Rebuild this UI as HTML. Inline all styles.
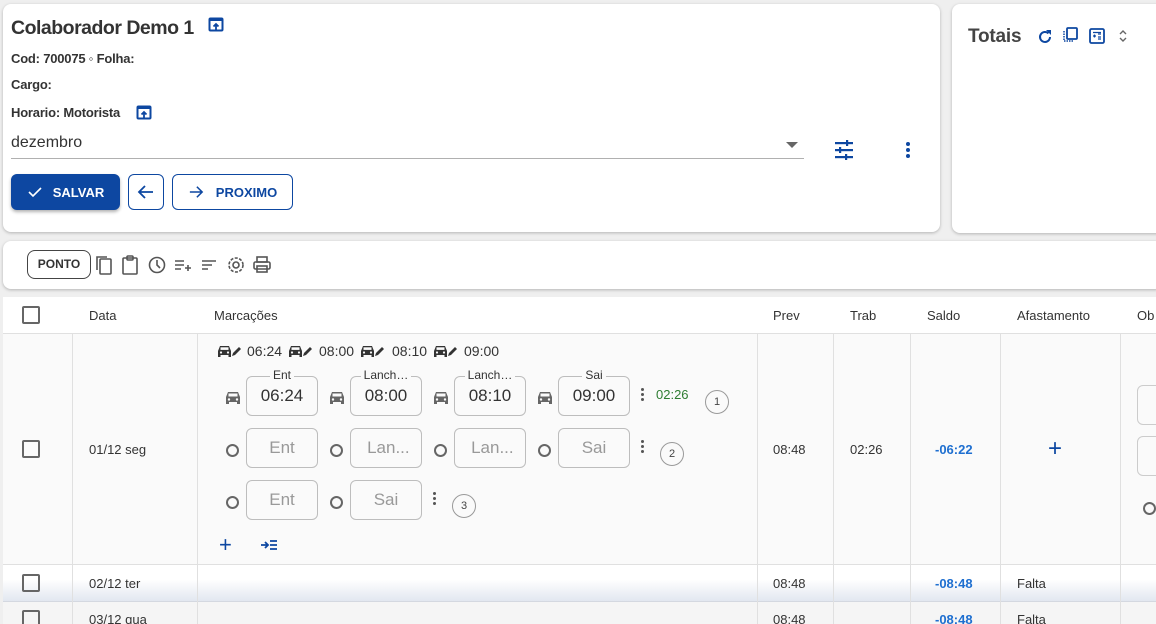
<!DOCTYPE html>
<html><head><meta charset="utf-8">
<style>
*{box-sizing:border-box;margin:0;padding:0}
html,body{width:1156px;height:624px;overflow:hidden}
body{background:#efefef;font-family:"Liberation Sans",Arial,sans-serif;color:#333;position:relative}
.a{position:absolute}
.card{position:absolute;background:#fff;border-radius:8px;box-shadow:0 1px 3px rgba(0,0,0,.25)}
.b{font-weight:bold;font-size:13px;color:#333;letter-spacing:-0.2px}
.btn{position:absolute;border:1px solid #0d47a1;border-radius:6px;color:#0d47a1;font-weight:bold;font-size:13px;display:flex;align-items:center;justify-content:center;background:#fff}
.cb{position:absolute;width:18px;height:18px;border:2px solid #666;border-radius:2px}
.vl{position:absolute;width:1px;background:#e0e0e0}
.hl{position:absolute;height:1px;background:#e0e0e0}
.t{position:absolute;font-size:14px;color:#333}
.f{position:absolute;width:72px;height:40px;border:1px solid #bdbdbd;border-radius:6px;font-size:17px;color:#333;text-align:center;line-height:38px}
.f.e{color:#999}
.lab{position:absolute;top:-8px;left:0;right:0;font-size:12px;line-height:12px;text-align:center}
.lab span{background:#fafafa;padding:0 3px}
.ci{position:absolute;width:13px;height:13px;border:2px solid #666;border-radius:50%}
.num{position:absolute;width:24px;height:24px;border:1px solid #999;border-radius:50%;font-size:11px;text-align:center;line-height:22px;color:#444}
.dots{position:absolute;width:3px}
.dots i{display:block;width:3px;height:3px;background:#555;border-radius:50%;margin-bottom:2px}
</style></head><body>
<svg width="0" height="0" style="position:absolute"><defs>
<g id="car"><path d="M2 7l2-5h10l2 5v7h-3v-2H5v2H2z"/><circle cx="5" cy="9.5" r="1.2" fill="#fafafa"/><circle cx="13" cy="9.5" r="1.2" fill="#fafafa"/><rect x="4.5" y="3.5" width="9" height="3" fill="#fafafa"/></g>
<g id="cp"><path d="M1 8l2-5h9l2 5v6h-2.5v-2h-8v2H1z" fill="#333"/><rect x="3.5" y="4.3" width="8" height="2.6" fill="#fafafa"/><circle cx="4" cy="9.5" r="1.1" fill="#fafafa"/><circle cx="11" cy="9.5" r="1.1" fill="#fafafa"/><path d="M15 13l1-3 6-6 2 2-6 6z" fill="#333"/></g>
</defs></svg>

<div class="card" style="left:3px;top:4px;width:937px;height:228px"></div>
<div class="a" style="left:11px;top:17px;font-size:19.5px;font-weight:bold;color:#333;letter-spacing:-0.5px">Colaborador Demo 1</div>
<svg class="a" style="left:208px;top:17px" width="16" height="16" viewBox="0 0 16 16"><rect x="1.5" y="1.5" width="13" height="12" rx="1" fill="none" stroke="#0d47a1" stroke-width="2"/><rect x="1" y="1" width="14" height="3" fill="#0d47a1"/><path d="M8 13V7M5.5 9.5L8 7l2.5 2.5" stroke="#0d47a1" stroke-width="1.8" fill="none"/></svg>
<div class="a b" style="left:11px;top:51px">Cod: 700075 ◦ Folha:</div>
<div class="a b" style="left:11px;top:77px">Cargo:</div>
<div class="a b" style="left:11px;top:105px">Horario: Motorista</div>
<svg class="a" style="left:136px;top:105px" width="16" height="16" viewBox="0 0 16 16"><rect x="1.5" y="1.5" width="13" height="12" rx="1" fill="none" stroke="#0d47a1" stroke-width="2"/><rect x="1" y="1" width="14" height="3" fill="#0d47a1"/><path d="M8 13V7M5.5 9.5L8 7l2.5 2.5" stroke="#0d47a1" stroke-width="1.8" fill="none"/></svg>
<div class="a" style="left:11px;top:134px;font-size:16px;color:#333">dezembro</div>
<div class="a" style="left:11px;top:158px;width:793px;height:1px;background:#b0b0b0"></div>
<div class="a" style="left:786px;top:142px;width:0;height:0;border-left:6px solid transparent;border-right:6px solid transparent;border-top:6px solid #666"></div>
<svg class="a" style="left:834px;top:140px" width="20" height="20" viewBox="0 0 20 20" fill="#0d47a1"><rect x="1" y="2" width="18" height="2.2"/><rect x="1" y="9" width="18" height="2.2"/><rect x="1" y="16" width="18" height="2.2"/><rect x="12" y="0" width="2.2" height="6" /><rect x="5" y="7" width="2.2" height="6"/><rect x="11" y="14" width="2.2" height="6"/></svg>
<div class="a" style="left:906px;top:142px"><div style="width:4px;height:4px;border-radius:50%;background:#0d47a1;margin-bottom:2px"></div><div style="width:4px;height:4px;border-radius:50%;background:#0d47a1;margin-bottom:2px"></div><div style="width:4px;height:4px;border-radius:50%;background:#0d47a1"></div></div>
<div class="btn" style="left:11px;top:174px;width:109px;height:36px;background:#0d47a1;color:#fff;box-shadow:0 2px 3px rgba(0,0,0,.3)"><svg width="16" height="14" viewBox="0 0 16 14" style="margin-right:10px"><path d="M2 7l4 4 8-8" stroke="#fff" stroke-width="1.6" fill="none"/></svg>SALVAR</div>
<div class="btn" style="left:128px;top:174px;width:36px;height:36px"><svg width="18" height="16" viewBox="0 0 18 16"><path d="M16 8H3M8 2L2 8l6 6" stroke="#0d47a1" stroke-width="1.8" fill="none"/></svg></div>
<div class="btn" style="left:172px;top:174px;width:121px;height:36px"><svg width="16" height="14" viewBox="0 0 18 16" style="margin-right:12px"><path d="M2 8h13M10 2l6 6-6 6" stroke="#0d47a1" stroke-width="1.8" fill="none"/></svg>PROXIMO</div>

<div class="card" style="left:952px;top:4px;width:220px;height:229px"></div>
<div class="a" style="left:968px;top:26px;font-size:19px;font-weight:bold;color:#444;letter-spacing:-0.2px">Totais</div>
<svg class="a" style="left:1037px;top:29px" width="16" height="16" viewBox="0 0 16 16"><path d="M13 8a5 5 0 1 1-1.5-3.6" stroke="#0d47a1" stroke-width="2" fill="none"/><path d="M9 1h5v5z" fill="#0d47a1"/></svg>
<svg class="a" style="left:1062px;top:27px" width="16" height="16" viewBox="0 0 16 16"><rect x="5" y="1" width="10" height="11" rx="1" fill="none" stroke="#0d47a1" stroke-width="1.8"/><path d="M2 4v10h10" stroke="#0d47a1" stroke-width="1.5" stroke-dasharray="1.5 1" fill="none"/></svg>
<svg class="a" style="left:1089px;top:28px" width="16" height="16" viewBox="0 0 16 16"><rect x="1" y="1" width="14" height="14" rx="1.5" fill="none" stroke="#0d47a1" stroke-width="1.8"/><path d="M4 8h3M5.5 6.5v3M9 6h3M9 9h3M9 11h3M4 4.5h8" stroke="#0d47a1" stroke-width="1.3"/></svg>
<svg class="a" style="left:1118px;top:28px" width="10" height="16" viewBox="0 0 10 16"><path d="M2 6l3-3 3 3M2 10l3 3 3-3" stroke="#666" stroke-width="1.4" fill="none"/></svg>

<div class="card" style="left:3px;top:241px;width:1160px;height:48px;border-radius:8px"></div>
<div class="a" style="left:27px;top:250px;width:64px;height:29px;border:1px solid #444;border-radius:8px;font-size:12px;font-weight:bold;text-align:center;line-height:27px;color:#333">PONTO</div>
<svg class="a" style="left:94px;top:254px" width="150" height="22" viewBox="0 0 150 22" fill="none" stroke="#555" stroke-width="1.6">
<rect x="6" y="5" width="11" height="15" rx="1"/><path d="M3 16V3h10"/>
<rect x="29" y="4" width="14" height="16" rx="1"/><rect x="33" y="2" width="6" height="4" rx="1"/>
<circle cx="63" cy="11" r="7.5"/><path d="M63 6v5l3 3"/>
<path d="M81 7h9M81 11h9M81 15h6M91 14h6M94 11v6"/>
<path d="M108 7h14M108 11h10M108 15h6"/>
<circle cx="142" cy="11" r="3"/><circle cx="142" cy="11" r="7" stroke-dasharray="3 1.5"/>
</svg>
<svg class="a" style="left:252px;top:256px" width="20" height="18" viewBox="0 0 20 18" fill="none" stroke="#555" stroke-width="1.6"><rect x="5" y="1" width="10" height="5"/><rect x="2" y="6" width="16" height="7" rx="1.5"/><rect x="5" y="10" width="10" height="6"/></svg>

<div class="a" style="left:3px;top:297px;width:1160px;height:330px;background:#fff"></div>
<div class="a" style="left:3px;top:333px;width:1160px;height:232px;background:#fafafa"></div>
<div class="a" style="left:3px;top:565px;width:1160px;height:36px;background:linear-gradient(#fff,#fff 40%,#e2e7f0)"></div>
<div class="a" style="left:3px;top:601px;width:1160px;height:30px;background:#f5f5f5"></div>
<div class="hl" style="left:3px;top:333px;width:1160px"></div>
<div class="hl" style="left:3px;top:564px;width:1160px"></div>
<div class="hl" style="left:3px;top:601px;width:1160px;background:#d4d8e0"></div>
<div class="vl" style="left:72px;top:333px;height:300px"></div>
<div class="vl" style="left:197px;top:333px;height:300px"></div>
<div class="vl" style="left:757px;top:333px;height:300px"></div>
<div class="vl" style="left:833px;top:333px;height:300px"></div>
<div class="vl" style="left:910px;top:333px;height:300px"></div>
<div class="vl" style="left:1000px;top:333px;height:300px"></div>
<div class="vl" style="left:1120px;top:333px;height:300px"></div>

<div class="cb" style="left:22px;top:306px"></div>
<div class="t" style="left:89px;top:308px;font-size:13px">Data</div>
<div class="t" style="left:214px;top:308px;font-size:13px">Marcações</div>
<div class="t" style="left:773px;top:308px;font-size:13px">Prev</div>
<div class="t" style="left:850px;top:308px;font-size:13px">Trab</div>
<div class="t" style="left:927px;top:308px;font-size:13px">Saldo</div>
<div class="t" style="left:1017px;top:308px;font-size:13px">Afastamento</div>
<div class="t" style="left:1137px;top:308px;font-size:13px">Ob</div>

<div class="cb" style="left:22px;top:440px"></div>
<div class="t" style="left:89px;top:442px;font-size:13px">01/12 seg</div>
<div class="t" style="left:773px;top:442px;font-size:13px">08:48</div>
<div class="t" style="left:850px;top:442px;font-size:13px">02:26</div>
<div class="t" style="left:935px;top:442px;font-size:13px;font-weight:bold;color:#1e6fd0">-06:22</div>
<div class="a" style="left:1048px;top:437px;font-size:24px;color:#0d47a1;line-height:24px">+</div>
<div class="a" style="left:1137px;top:385px;width:40px;height:40px;border:1px solid #ccc;border-radius:6px"></div>
<div class="a" style="left:1137px;top:436px;width:40px;height:40px;border:1px solid #ccc;border-radius:6px"></div>
<div class="ci" style="left:1143px;top:502px"></div>

<svg class="a" style="left:215px;top:343px" width="28" height="15" viewBox="0 0 24 15"><use href="#cp"/></svg>
<div class="t" style="left:247px;top:343px;font-size:14px">06:24</div>
<svg class="a" style="left:286px;top:343px" width="28" height="15" viewBox="0 0 24 15"><use href="#cp"/></svg>
<div class="t" style="left:319px;top:343px;font-size:14px">08:00</div>
<svg class="a" style="left:358px;top:343px" width="28" height="15" viewBox="0 0 24 15"><use href="#cp"/></svg>
<div class="t" style="left:392px;top:343px;font-size:14px">08:10</div>
<svg class="a" style="left:431px;top:343px" width="28" height="15" viewBox="0 0 24 15"><use href="#cp"/></svg>
<div class="t" style="left:464px;top:343px;font-size:14px">09:00</div>

<!-- row 1 -->
<svg class="a" style="left:224px;top:390px" width="330" height="16" viewBox="0 0 330 16" fill="#666">
<use href="#car"/><use href="#car" x="104"/><use href="#car" x="208"/><use href="#car" x="312"/>
</svg>
<div class="f" style="left:246px;top:376px"><div class="lab"><span>Ent</span></div>06:24</div>
<div class="f" style="left:350px;top:376px"><div class="lab"><span>Lanch…</span></div>08:00</div>
<div class="f" style="left:454px;top:376px"><div class="lab"><span>Lanch…</span></div>08:10</div>
<div class="f" style="left:558px;top:376px"><div class="lab"><span>Sai</span></div>09:00</div>
<div class="dots" style="left:641px;top:388px"><i></i><i></i><i></i></div>
<div class="t" style="left:656px;top:387px;font-size:13px;color:#2e7d32">02:26</div>
<div class="num" style="left:705px;top:390px">1</div>
<!-- row 2 -->
<div class="ci" style="left:226px;top:444px"></div><div class="f e" style="left:246px;top:428px">Ent</div>
<div class="ci" style="left:330px;top:444px"></div><div class="f e" style="left:350px;top:428px">&nbsp;Lan...</div>
<div class="ci" style="left:434px;top:444px"></div><div class="f e" style="left:454px;top:428px">&nbsp;Lan...</div>
<div class="ci" style="left:538px;top:444px"></div><div class="f e" style="left:558px;top:428px">Sai</div>
<div class="dots" style="left:641px;top:440px"><i></i><i></i><i></i></div>
<div class="num" style="left:660px;top:442px">2</div>
<!-- row 3 -->
<div class="ci" style="left:226px;top:496px"></div><div class="f e" style="left:246px;top:480px">Ent</div>
<div class="ci" style="left:330px;top:496px"></div><div class="f e" style="left:350px;top:480px">Sai</div>
<div class="dots" style="left:433px;top:492px"><i></i><i></i><i></i></div>
<div class="num" style="left:452px;top:494px">3</div>
<div class="a" style="left:219px;top:534px;font-size:22px;color:#0d47a1;line-height:22px">+</div>
<svg class="a" style="left:260px;top:539px" width="18" height="12" viewBox="0 0 18 12" stroke="#0d47a1" stroke-width="1.8" fill="none"><path d="M1 6h7M5 3l3 3-3 3M10 2h7M10 6h7M10 10h7"/></svg>

<div class="cb" style="left:22px;top:574px"></div>
<div class="t" style="left:89px;top:576px;font-size:13px">02/12 ter</div>
<div class="t" style="left:773px;top:576px;font-size:13px">08:48</div>
<div class="t" style="left:935px;top:576px;font-size:13px;font-weight:bold;color:#1e6fd0">-08:48</div>
<div class="t" style="left:1017px;top:576px;font-size:13px">Falta</div>

<div class="cb" style="left:22px;top:610px"></div>
<div class="t" style="left:89px;top:612px;font-size:13px">03/12 qua</div>
<div class="t" style="left:773px;top:612px;font-size:13px">08:48</div>
<div class="t" style="left:935px;top:612px;font-size:13px;font-weight:bold;color:#1e6fd0">-08:48</div>
<div class="t" style="left:1017px;top:612px;font-size:13px">Falta</div>
</body></html>
